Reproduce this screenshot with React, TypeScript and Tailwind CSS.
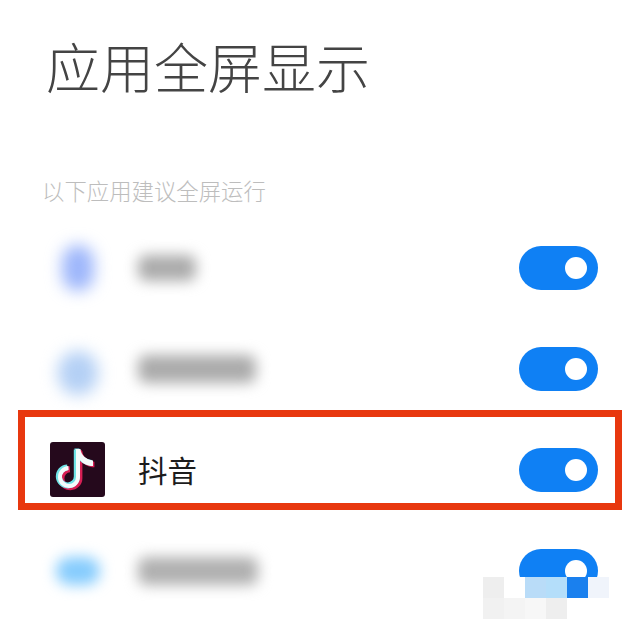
function Toggle() {
  return (
    <div className="flex h-[44px] w-[79px] items-center justify-end rounded-full bg-[#0f80f4] pr-[11px]">
      <span className="h-[22px] w-[22px] rounded-full bg-white" />
    </div>
  );
}

function NoteShape({ color, width, dx, dy }: { color: string; width: number; dx: number; dy: number }) {
  return (
    <g transform={`translate(${dx} ${dy})`}>
      <path d="M28 8V35A9 9 0 1 1 18.5 26" fill="none" stroke={color} strokeWidth={width} />
      <path d="M25.5 7H30.5C31 13 36 17.5 43 18.5V24C37 24 33 21.5 30 18Z" fill={color} />
    </g>
  );
}

function DouyinIcon() {
  return (
    <div className="h-[55px] w-[55px] rounded-[3px] bg-[#25091c]">
      <svg viewBox="0 0 55 55" className="h-[55px] w-[55px]">
        <NoteShape color="#d81f55" width={6} dx={1.4} dy={1.2} />
        <NoteShape color="#6fe3e6" width={6} dx={-1.2} dy={-0.6} />
        <NoteShape color="#f4fbfb" width={4} dx={0} dy={0} />
      </svg>
    </div>
  );
}

function BlurRow({ icon, text }: { icon: React.ReactNode; text: React.ReactNode }) {
  return (
    <div className="flex h-[101px] items-center pl-[50px] pr-[42px]">
      <div className="flex w-[55px] justify-center">{icon}</div>
      <div className="ml-[33px] flex-1">{text}</div>
      <Toggle />
    </div>
  );
}

const MOSAIC = [
  ["bg-[#eeeeee]", "bg-white", "bg-[#b9dcf8]", "bg-[#b4defa]", "bg-[#1a80ee]", "bg-[#f0f4fb]"],
  ["bg-[#f1f1f1]", "bg-[#f4f4f4]", "bg-[#f7f7f7]", "bg-[#eeeeee]", "bg-white", "bg-white"],
];

export default function App() {
  return (
    <div className="relative h-[640px] w-[640px] overflow-hidden bg-white font-['Noto_Sans_CJK_SC','Noto_Sans',sans-serif]">
      <h1 className="pl-[46px] pt-[34px] text-[54px] font-extralight leading-[64px] text-[#444444]">应用全屏显示</h1>
      <p className="pl-[42px] pt-[76px] text-[22.4px] font-light leading-[32px] text-[#bdbdbd]">以下应用建议全屏运行</p>

      <div className="pt-[11px]">
        <BlurRow
          icon={<div className="h-[46px] w-[32px] rounded-full bg-[#9db6fb] blur-[8px]" />}
          text={<div className="h-[26px] w-[58px] rounded-lg bg-[#ababab] blur-[7px]" />}
        />
        <BlurRow
          icon={<div className="mt-[8px] h-[44px] w-[40px] rounded-full bg-[#b4d0f5] blur-[8px]" />}
          text={<div className="h-[28px] w-[118px] rounded-lg bg-[#ababab] blur-[7px]" />}
        />
        <div className="flex h-[101px] items-center pl-[50px] pr-[42px]">
          <DouyinIcon />
          <span className="ml-[33px] flex-1 text-[29.5px] leading-none text-[#1c1c1c]">抖音</span>
          <Toggle />
        </div>
        <BlurRow
          icon={<div className="h-[28px] w-[44px] rounded-full bg-[#86ccfd] blur-[7px]" />}
          text={<div className="h-[28px] w-[120px] rounded-lg bg-[#b0b0b0] blur-[7px]" />}
        />
      </div>

      {/* annotation frame drawn over the list */}
      <div className="pointer-events-none absolute left-[18px] top-[410px] h-[100px] w-[604px] border-[7px] border-[#e8380f]" />

      {/* mosaic patch over the last row */}
      <div className="absolute left-[483px] top-[577px] grid grid-cols-[repeat(6,21px)] grid-rows-[repeat(2,21px)]">
        {MOSAIC.flat().map((c, i) => (
          <div key={i} className={c} />
        ))}
      </div>
    </div>
  );
}
